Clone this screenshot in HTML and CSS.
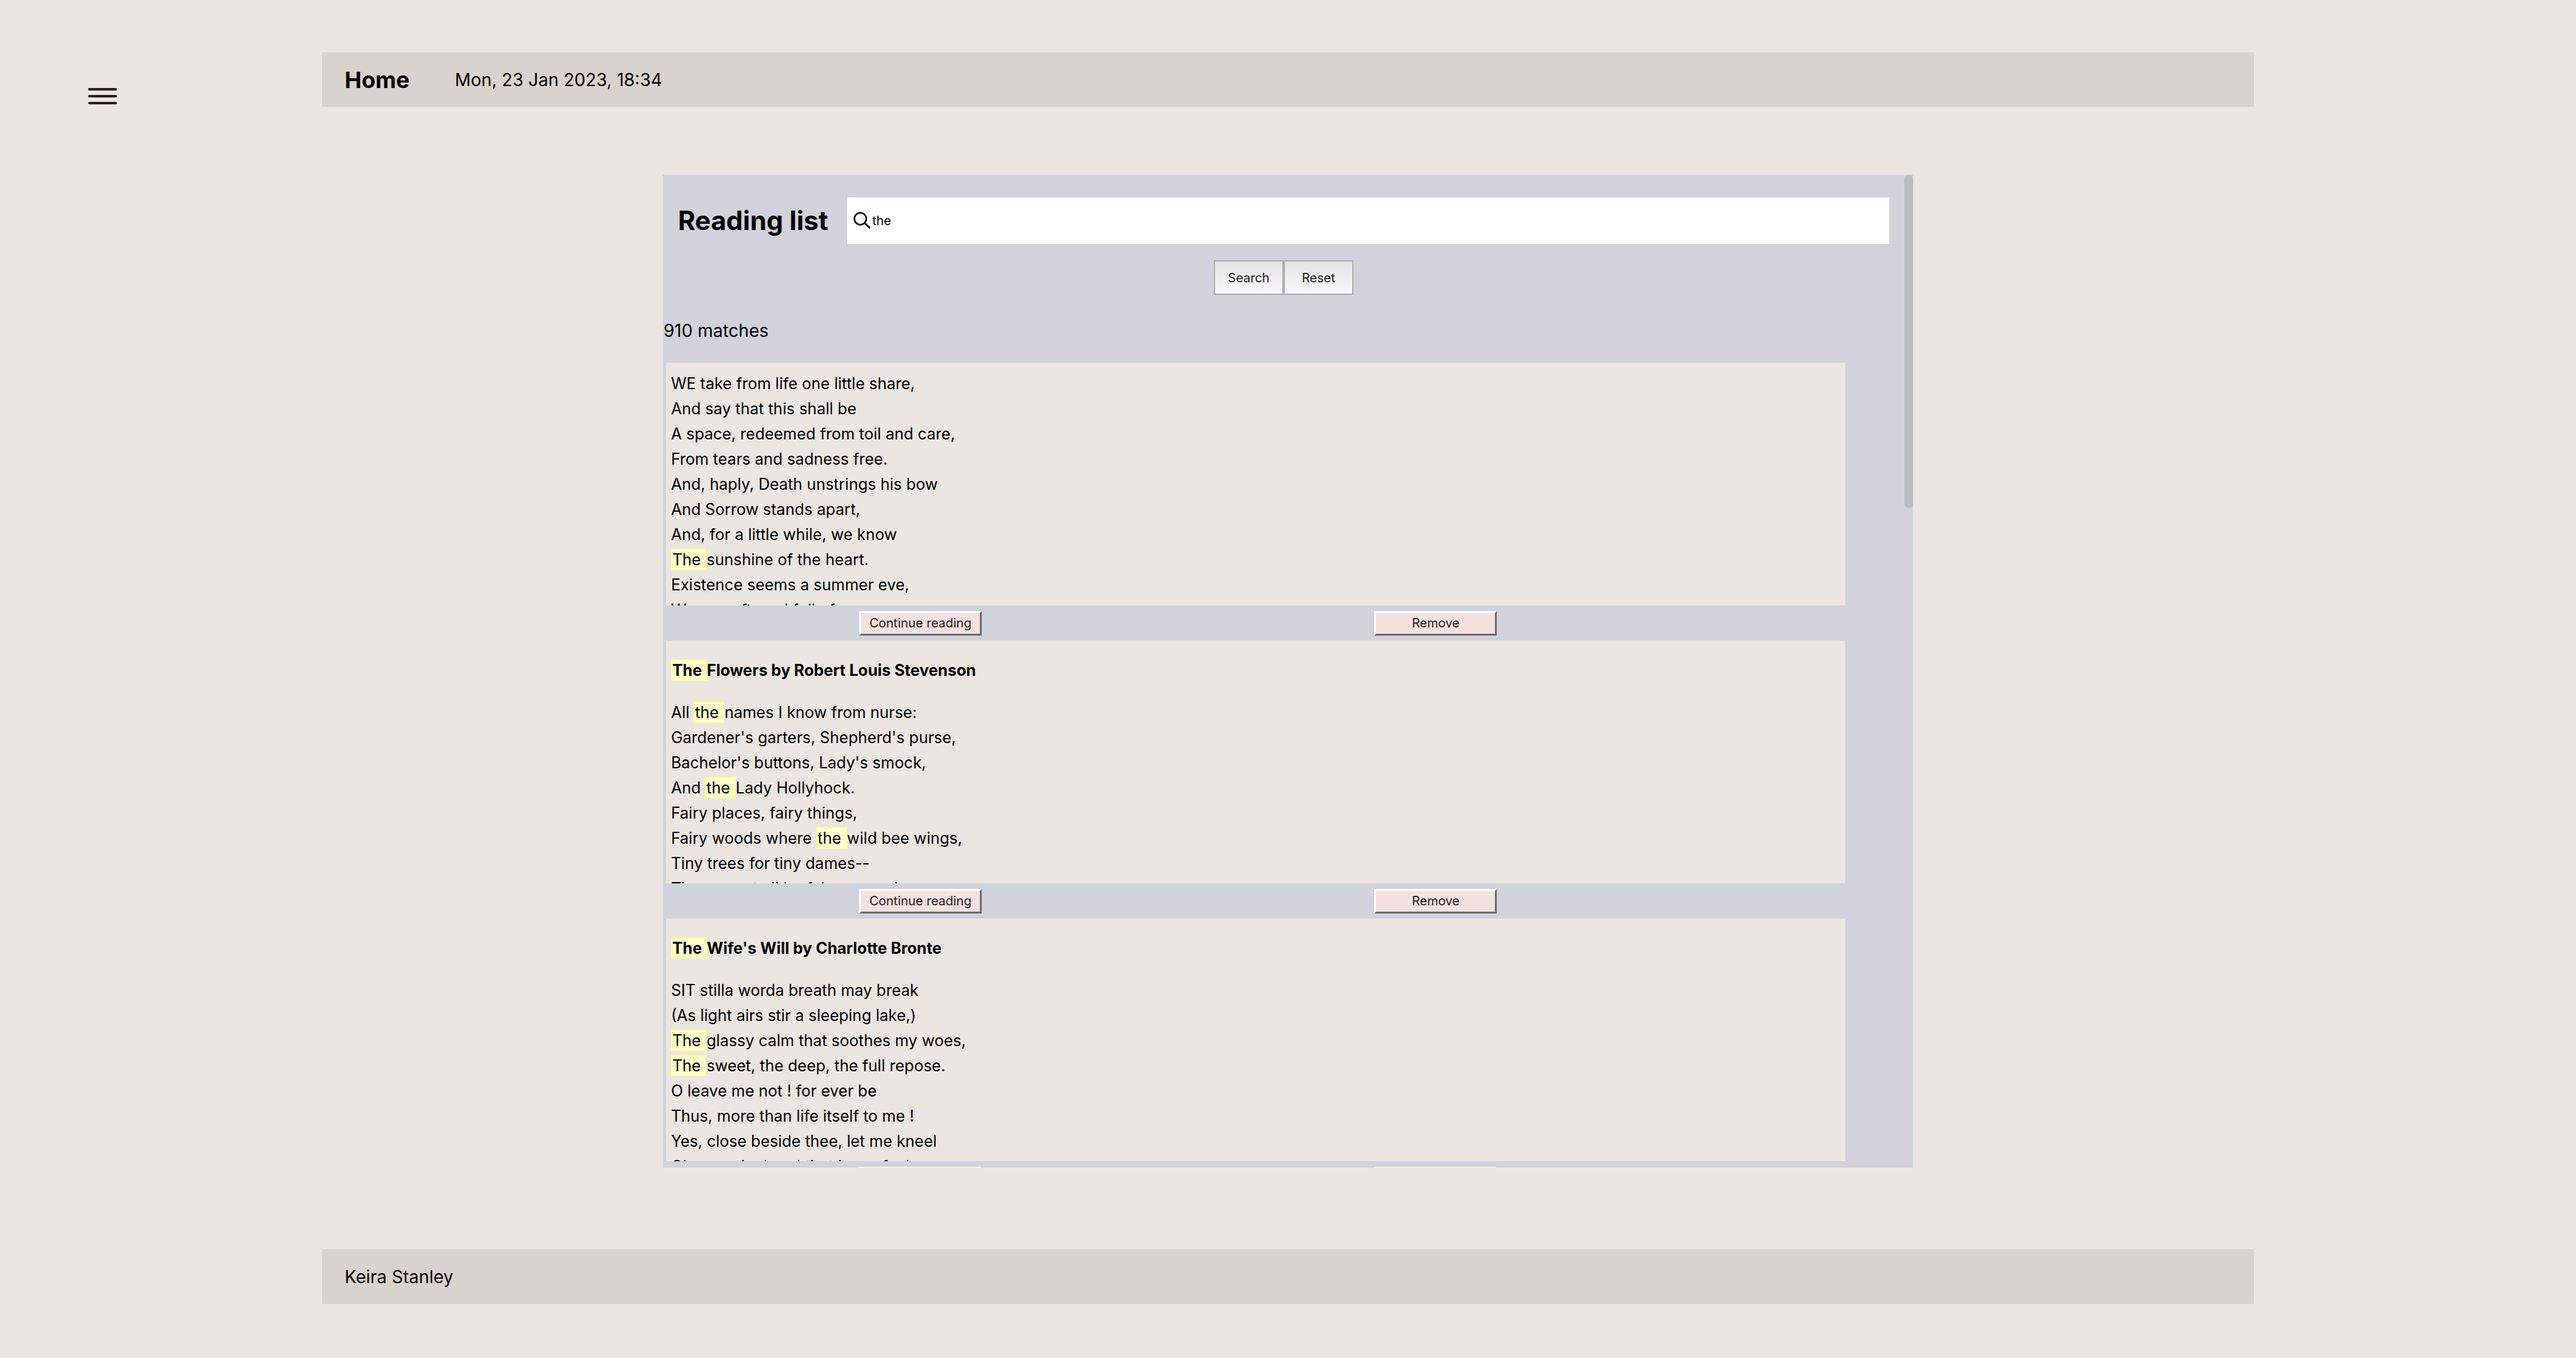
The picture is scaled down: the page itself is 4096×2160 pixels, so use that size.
FILE: index.html
```html
<!DOCTYPE html>
<html lang="en">
<head>
<meta charset="utf-8">
<title>Reading list</title>
<link rel="stylesheet" href="styles.css">
</head>
<body>
<nav class="side">
  <button class="menu" type="button" aria-label="Open menu">
    <svg viewBox="0 0 46 28" width="46" height="28" fill="none" stroke="#222" stroke-width="4" stroke-linecap="round"><path d="M2 2h42M2 13h42M2 24h42"/></svg>
  </button>
</nav>
<div class="page">
  <header class="bar">
    <h1 class="bar-title">Home</h1>
    <time datetime="2023-01-23T18:34">Mon, 23 Jan 2023, 18:34</time>
  </header>
  <main class="panel">
    <div class="scroller">
      <form class="search">
        <div class="search-line">
          <h2 class="heading">Reading list</h2>
          <label class="search-box">
            <svg viewBox="0 0 28 28" width="28" height="28" fill="none" stroke="#000"><circle cx="11" cy="11" r="9.500" stroke-width="2.500"/><path d="M18 18l8.500 8" stroke-width="3"/></svg>
            <input class="search-input" type="text" value="the" aria-label="Search the reading list">
          </label>
        </div>
        <div class="search-actions">
          <button class="tool" type="button">Search</button>
          <button class="tool" type="button">Reset</button>
        </div>
      </form>
      <p class="matches">910 matches</p>

      <article class="card card-untitled">
        <p class="verse">WE take from life one little share,<br>
        And say that this shall be<br>
        A space, redeemed from toil and care,<br>
        From tears and sadness free.<br>
        And, haply, Death unstrings his bow<br>
        And Sorrow stands apart,<br>
        And, for a little while, we know<br>
        <mark>The </mark>sunshine of the heart.<br>
        Existence seems a summer eve,<br>
        Warm, soft, and full of peace,</p>
      </article>
      <div class="actions">
        <button class="action" type="button">Continue reading</button>
        <button class="action" type="button">Remove</button>
      </div>

      <article class="card">
        <h3 class="poem-title"><mark>The </mark>Flowers by Robert Louis Stevenson</h3>
        <p class="verse">All <mark>the </mark>names I know from nurse:<br>
        Gardener's garters, Shepherd's purse,<br>
        Bachelor's buttons, Lady's smock,<br>
        And <mark>the </mark>Lady Hollyhock.<br>
        Fairy places, fairy things,<br>
        Fairy woods where <mark>the </mark>wild bee wings,<br>
        Tiny trees for tiny dames--<br>
        These must all be fairy names!</p>
      </article>
      <div class="actions">
        <button class="action" type="button">Continue reading</button>
        <button class="action" type="button">Remove</button>
      </div>

      <article class="card">
        <h3 class="poem-title"><mark>The </mark>Wife's Will by Charlotte Bronte</h3>
        <p class="verse">SIT stilla worda breath may break<br>
        (As light airs stir a sleeping lake,)<br>
        <mark>The </mark>glassy calm that soothes my woes,<br>
        <mark>The </mark>sweet, the deep, the full repose.<br>
        O leave me not ! for ever be<br>
        Thus, more than life itself to me !<br>
        Yes, close beside thee, let me kneel<br>
        Give me thy hand that I may feel</p>
      </article>
      <div class="actions">
        <button class="action" type="button">Continue reading</button>
        <button class="action" type="button">Remove</button>
      </div>
    </div>
    <div class="thumb"></div>
  </main>
  <footer class="bar">Keira Stanley</footer>
</div>
</body>
</html>
```
FILE: styles.css
```css
* {
  box-sizing: border-box;
}

body {
  margin: 0;
  height: 100vh;
  display: grid;
  grid-template-columns: 1fr 6fr 1fr;
  background: #ebe6e1;
  color: #000;
  font-family: Inter, "Liberation Sans", sans-serif;
  font-size: 28px;
  line-height: 40px;
}

button,
input {
  font-family: inherit;
}

.side {
  padding: 140px 0 0 140px;
}

.menu {
  display: block;
  padding: 0;
  border: 0;
  background: none;
}

.menu svg,
.search-box svg {
  display: block;
  flex: none;
}

.page {
  min-height: 0;
  display: flex;
  flex-direction: column;
  padding: 83px 0 86px;
}

.bar {
  flex: none;
  display: flex;
  align-items: center;
  gap: 72px;
  height: 87px;
  padding: 0 36px;
  background: #d8d3ce;
}

.bar-title {
  margin: 0;
  font-size: 36px;
}

.panel {
  position: relative;
  flex: 1;
  min-height: 0;
  width: 48.54vw;
  margin: 108px auto 130px;
  background: #d0d3dc;
}

.scroller {
  height: 100%;
  padding-right: 14px;
  overflow-y: auto;
  scrollbar-width: none;
}

.thumb {
  position: absolute;
  top: 0;
  right: 0;
  width: 14px;
  height: 530px;
  border-radius: 7px;
  background: #babec3;
}

.search {
  padding: 36px 24px 0;
}

.search-line {
  display: flex;
  align-items: center;
  gap: 30px;
}

.heading {
  margin: 0;
  font-size: 42px;
}

.search-box {
  flex: 1;
  display: flex;
  align-items: center;
  height: 74px;
  padding-left: 10px;
  background: #fff;
}

.search-input {
  flex: 1;
  height: 100%;
  padding: 0 0 0 2px;
  border: 0;
  outline: 0;
  background: none;
  font-size: 20px;
}

.search-actions {
  display: flex;
  justify-content: center;
  margin-top: 26px;
}

.tool {
  width: 111px;
  height: 55px;
  padding: 0;
  border: 2px solid #adadad;
  background: linear-gradient(#e5e5e5, #f7f7f7);
  color: #222;
  font-size: 20px;
}

.matches {
  margin: 37px 0 31px;
  padding-left: 1px;
}

.card {
  width: 95%;
  height: 386px;
  margin-left: 5px;
  padding: 0 8px;
  overflow: hidden;
  background: #ebe6e1;
  font-size: 25px;
}

.card-untitled {
  padding-top: 13px;
}

.poem-title {
  margin: 27px 0;
  font-size: 25px;
}

.verse {
  margin: 0;
}

mark {
  border: 2px solid #ffff99;
  background: #ffffcc;
  color: inherit;
}

.actions {
  display: flex;
  align-items: center;
  justify-content: space-around;
  width: 83%;
  height: 56px;
}

.action {
  width: 195px;
  height: 39px;
  padding: 0;
  border: 3px solid;
  border-color: #fff #6b6b6b #6b6b6b #fff;
  background: #f5e1e0;
  color: #222;
  font-size: 20px;
}
```
